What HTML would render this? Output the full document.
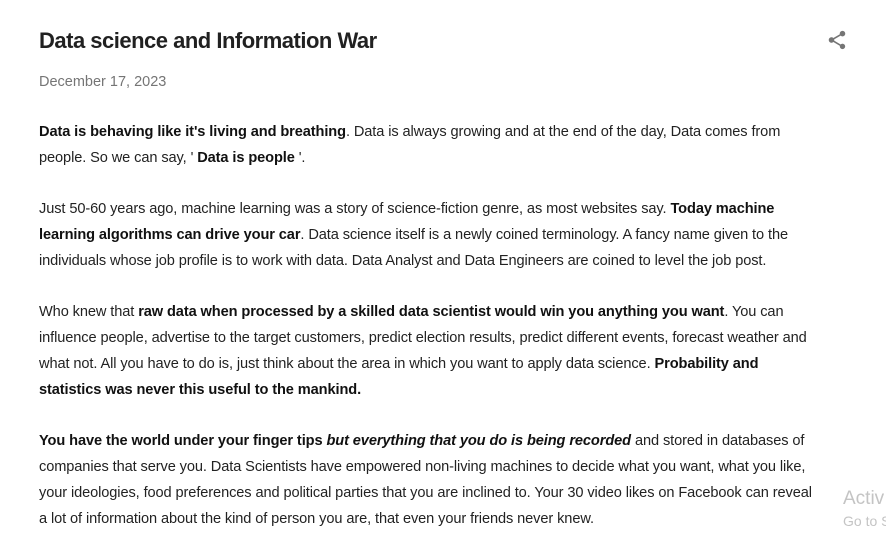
<!DOCTYPE html>
<html><head><meta charset="utf-8"><style>
body{margin:0;width:886px;height:546px;overflow:hidden;background:#fff;font-family:"Liberation Sans",sans-serif;color:#222;position:relative}
h1{position:absolute;left:39px;top:28px;margin:0;font-size:22px;font-weight:bold;letter-spacing:-0.5px;color:#212121}
.date{position:absolute;left:39px;top:74px;font-size:14.5px;color:#757575;letter-spacing:0px}
.share{position:absolute;left:826px;top:29px}
.body{position:absolute;left:39px;top:119px;font-size:14.6px;line-height:26px;white-space:nowrap;letter-spacing:-0.1px}
.body p{margin:0 0 25px 0}
b{color:#111}
.act{position:absolute;left:843px;top:488px;font-size:19px;color:#c4c4c4;white-space:nowrap}
.act2{position:absolute;left:843px;top:513px;font-size:14px;color:#c4c4c4;white-space:nowrap}
</style></head><body>
<h1>Data science and Information War</h1>
<svg class="share" width="22" height="22" viewBox="0 0 24 24"><path fill="#757575" d="M18 16.08c-.76 0-1.44.3-1.96.77L8.91 12.7c.05-.23.09-.46.09-.7s-.04-.47-.09-.7l7.050-4.11c.54.5 1.25.81 2.04.81 1.66 0 3-1.34 3-3s-1.34-3-3-3-3 1.340-3 3c0 .24.04.47.09.7L8.04 9.81C7.5 9.31 6.79 9 6 9c-1.66 0-3 1.34-3 3s1.34 3 3 3c.79 0 1.5-.31 2.04-.81l7.12 4.16c-.05.21-.08.43-.08.65 0 1.61 1.31 2.92 2.92 2.920s2.92-1.31 2.92-2.92-1.31-2.92-2.92-2.92z"/></svg>
<div class="date">December 17, 2023</div>
<div class="body">
<p><b>Data is behaving like it's living and breathing</b>. Data is always growing and at the end of the day, Data comes from<br>people. So we can say, ' <b>Data is people</b> '.</p>
<p>Just 50-60 years ago, machine learning was a story of science-fiction genre, as most websites say. <b>Today machine<br>learning algorithms can drive your car</b>. Data science itself is a newly coined terminology. A fancy name given to the<br>individuals whose job profile is to work with data. Data Analyst and Data Engineers are coined to level the job post.</p>
<p>Who knew that <b>raw data when processed by a skilled data scientist would win you anything you want</b>. You can<br>influence people, advertise to the target customers, predict election results, predict different events, forecast weather and<br>what not. All you have to do is, just think about the area in which you want to apply data science. <b>Probability and<br>statistics was never this useful to the mankind.</b></p>
<p><b>You have the world under your finger tips <i>but everything that you do is being recorded</i></b> and stored in databases of<br>companies that serve you. Data Scientists have empowered non-living machines to decide what you want, what you like,<br>your ideologies, food preferences and political parties that you are inclined to. Your 30 video likes on Facebook can reveal<br>a lot of information about the kind of person you are, that even your friends never knew.</p>
</div>
<div class="act">Activ</div>
<div class="act2">Go to S</div>
</body></html>
